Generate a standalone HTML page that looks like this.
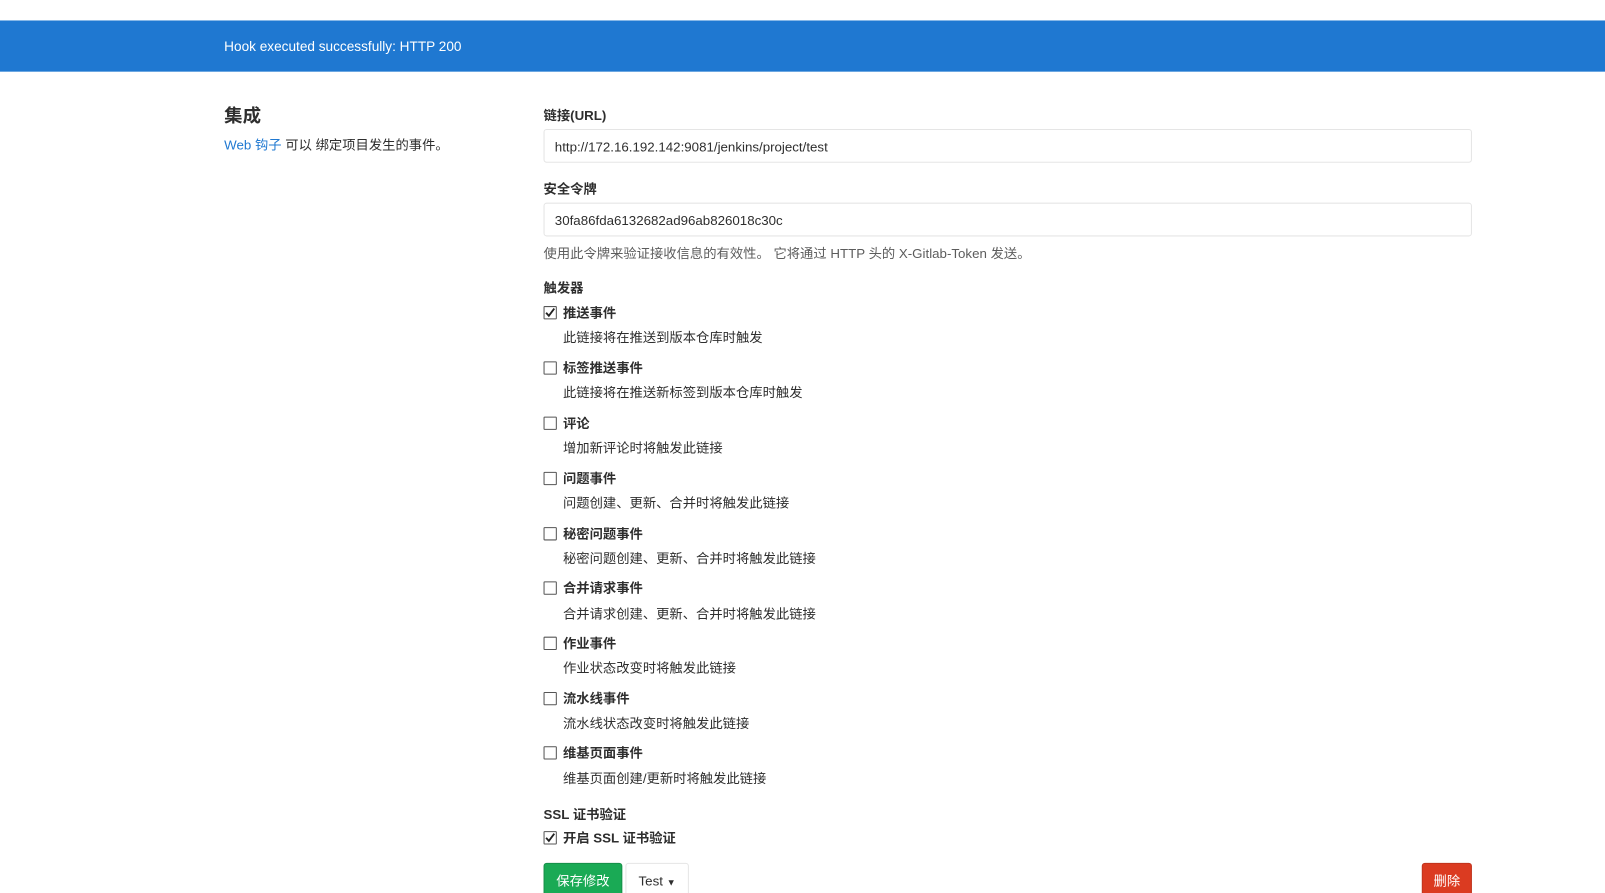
<!DOCTYPE html>
<html><head><meta charset="utf-8"><style>
*{box-sizing:border-box;margin:0;padding:0}
html,body{width:1605px;height:893px;overflow:hidden;background:#fff}
body{font-family:"Liberation Sans","Noto Sans CJK SC",sans-serif;font-size:13px;color:#2e2e2e;position:relative}
#w{position:absolute;left:0;top:0;width:1568px;height:872px;transform:scale(1.0236);transform-origin:0 0}
.banner{position:absolute;top:20px;left:0;width:1568px;height:50px;background:#1f78d1;color:#fff;font-size:13.3px;line-height:52px;padding-left:219px}
.a{position:absolute;white-space:nowrap;margin-top:-2px}
h4{position:absolute;left:219px;top:99px;font-size:18px;font-weight:bold;color:#2e2e2e}
.lbl{font-weight:bold;font-size:13px}
.inp{position:absolute;left:531px;width:907px;height:33px;border:1px solid #e5e5e5;border-radius:3px;padding-left:10px;line-height:33px;font-size:13px;color:#2e2e2e}
.cb{position:absolute;left:531px;width:13px;height:13px;border:1px solid #555;border-radius:1px;background:#fff;margin-top:-1px}
.muted{color:#5c5c5c}
.btn{position:absolute;top:843px;height:36px;border-radius:3px;line-height:34px;font-size:13px;text-align:center}
</style></head><body><div id="w">
<div class="banner">Hook executed successfully: HTTP 200</div>
<h4>集成</h4>
<div class="a" style="left:219px;top:133px"><span style="color:#1f78d1">Web 钩子</span> 可以 绑定项目发生的事件。</div>
<div class="a lbl" style="left:531px;top:104px">链接(URL)</div>
<div class="inp" style="top:126px">http://172.16.192.142:9081/jenkins/project/test</div>
<div class="a lbl" style="left:531px;top:176px">安全令牌</div>
<div class="inp" style="top:198px">30fa86fda6132682ad96ab826018c30c</div>
<div class="a muted" style="left:531px;top:239px">使用此令牌来验证接收信息的有效性。 它将通过 HTTP 头的 X-Gitlab-Token 发送。</div>
<div class="a lbl" style="left:531px;top:273px">触发器</div>

<div class="cb" style="top:300px"><svg width="11" height="11" viewBox="0 0 11 11" style="position:absolute;left:0;top:0"><path d="M1.5 5.5 L4.2 8.5 L9.5 1.5" stroke="#222" stroke-width="1.8" fill="none"/></svg></div>
<div class="a lbl" style="left:550px;top:297px">推送事件</div>
<div class="a" style="left:550px;top:321px">此链接将在推送到版本仓库时触发</div>

<div class="cb" style="top:354px"></div>
<div class="a lbl" style="left:550px;top:351px">标签推送事件</div>
<div class="a" style="left:550px;top:375px">此链接将在推送新标签到版本仓库时触发</div>

<div class="cb" style="top:408px"></div>
<div class="a lbl" style="left:550px;top:405px">评论</div>
<div class="a" style="left:550px;top:429px">增加新评论时将触发此链接</div>

<div class="cb" style="top:462px"></div>
<div class="a lbl" style="left:550px;top:459px">问题事件</div>
<div class="a" style="left:550px;top:483px">问题创建、更新、合并时将触发此链接</div>

<div class="cb" style="top:516px"></div>
<div class="a lbl" style="left:550px;top:513px">秘密问题事件</div>
<div class="a" style="left:550px;top:537px">秘密问题创建、更新、合并时将触发此链接</div>

<div class="cb" style="top:569px"></div>
<div class="a lbl" style="left:550px;top:566px">合并请求事件</div>
<div class="a" style="left:550px;top:591px">合并请求创建、更新、合并时将触发此链接</div>

<div class="cb" style="top:623px"></div>
<div class="a lbl" style="left:550px;top:620px">作业事件</div>
<div class="a" style="left:550px;top:644px">作业状态改变时将触发此链接</div>

<div class="cb" style="top:677px"></div>
<div class="a lbl" style="left:550px;top:674px">流水线事件</div>
<div class="a" style="left:550px;top:698px">流水线状态改变时将触发此链接</div>

<div class="cb" style="top:730px"></div>
<div class="a lbl" style="left:550px;top:727px">维基页面事件</div>
<div class="a" style="left:550px;top:752px">维基页面创建/更新时将触发此链接</div>

<div class="a lbl" style="left:531px;top:787px">SSL 证书验证</div>
<div class="cb" style="top:813px"><svg width="11" height="11" viewBox="0 0 11 11" style="position:absolute;left:0;top:0"><path d="M1.5 5.5 L4.2 8.5 L9.5 1.5" stroke="#222" stroke-width="1.8" fill="none"/></svg></div>
<div class="a lbl" style="left:550px;top:810px">开启 SSL 证书验证</div>

<div class="btn" style="left:531px;width:77px;background:#1aaa55;border:1px solid #168f48;color:#fff">保存修改</div>
<div class="btn" style="left:611px;width:62px;background:#fff;border:1px solid #e5e5e5;color:#2e2e2e">Test <span style="font-size:9px">▼</span></div>
<div class="btn" style="left:1389px;width:49px;background:#db3b21;border:1px solid #c0341d;color:#fff">删除</div>
</div></body></html>
